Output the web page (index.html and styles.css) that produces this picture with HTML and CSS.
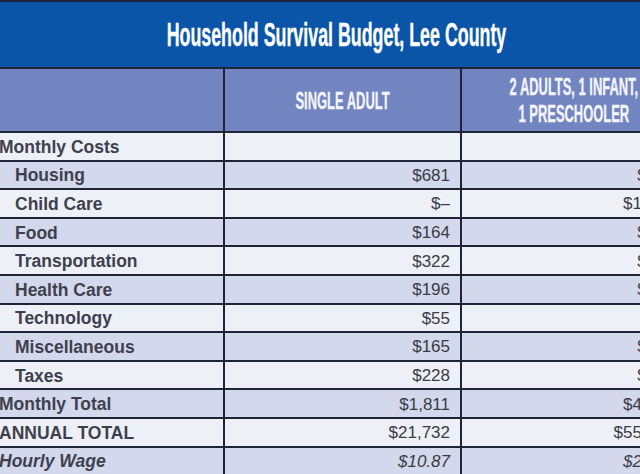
FILE: index.html
```html
<!DOCTYPE html>
<html lang="en">
<head>
<meta charset="utf-8">
<title>Household Survival Budget, Lee County</title>
<link rel="stylesheet" href="styles.css">
</head>
<body>
<div class="budget">
  <div class="title"><span class="cond title-text">Household Survival Budget, Lee County</span></div>

  <div class="head blank"></div>
  <div class="head"><span class="cond head-text">SINGLE ADULT</span></div>
  <div class="head"><span class="cond head-text">2 ADULTS, 1 INFANT,<br>1 PRESCHOOLER</span></div>

  <div class="cell label light">Monthly Costs</div>
  <div class="cell value light"></div>
  <div class="cell value light"></div>

  <div class="cell label sub dark">Housing</div>
  <div class="cell value dark">$681</div>
  <div class="cell value dark">$839</div>

  <div class="cell label sub light">Child Care</div>
  <div class="cell value light">$–</div>
  <div class="cell value light">$1,104</div>

  <div class="cell label sub dark">Food</div>
  <div class="cell value dark">$164</div>
  <div class="cell value dark">$571</div>

  <div class="cell label sub light">Transportation</div>
  <div class="cell value light">$322</div>
  <div class="cell value light">$644</div>

  <div class="cell label sub dark">Health Care</div>
  <div class="cell value dark">$196</div>
  <div class="cell value dark">$589</div>

  <div class="cell label sub light">Technology</div>
  <div class="cell value light">$55</div>
  <div class="cell value light">$75</div>

  <div class="cell label sub dark">Miscellaneous</div>
  <div class="cell value dark">$165</div>
  <div class="cell value dark">$420</div>

  <div class="cell label sub light">Taxes</div>
  <div class="cell value light">$228</div>
  <div class="cell value light">$379</div>

  <div class="cell label dark">Monthly Total</div>
  <div class="cell value dark">$1,811</div>
  <div class="cell value dark">$4,621</div>

  <div class="cell label light">ANNUAL TOTAL</div>
  <div class="cell value light">$21,732</div>
  <div class="cell value light">$55,452</div>

  <div class="cell label dark italic">Hourly Wage</div>
  <div class="cell value dark italic">$10.87</div>
  <div class="cell value dark italic">$27.73</div>
</div>
</body>
</html>
```

FILE: styles.css
```css
html, body {
  margin: 0;
  padding: 0;
  background: #eef0f8;
  overflow: hidden;
}

.budget {
  display: grid;
  grid-template-columns: 236px 235px 223px;
  grid-template-rows: 65px 62px repeat(12, 26.6px);
  gap: 2px;
  padding-top: 2px;
  margin-left: -13px;
  width: 698px;
  background: #1f2437;
  font-family: "Liberation Sans", Arial, sans-serif;
}

.title {
  grid-column: 1 / -1;
  background: #0b55a8;
  display: flex;
  align-items: center;
  justify-content: center;
}

.cond {
  display: inline-block;
  font-family: "Liberation Sans", Arial, sans-serif;
  font-weight: 700;
  white-space: nowrap;
  color: #ffffff;
  transform-origin: center center;
}

.title-text {
  font-size: 33px;
  line-height: 36px;
  transform: scaleX(0.54);
  -webkit-text-stroke: 0.4px #ffffff;
}

.head {
  background: #7385c1;
  display: flex;
  align-items: center;
  justify-content: center;
  text-align: center;
}

.head-text {
  font-size: 23.5px;
  line-height: 27px;
  color: #f4f5fb;
  transform: scaleX(0.55);
  -webkit-text-stroke: 0.3px #f4f5fb;
  padding-top: 2px;
}

.cell {
  display: flex;
  align-items: center;
  font-size: 17px;
  padding-top: 2px;
  box-sizing: border-box;
}

.light {
  background: #eef0f8;
}

.dark {
  background: #d3d8ed;
}

.label {
  font-weight: 700;
  font-size: 17.5px;
  color: #3f404d;
  padding-left: 12px;
}

.label.sub {
  padding-left: 28px;
}

.value {
  justify-content: flex-end;
  padding-right: 10px;
  color: #3a3b44;
}

.italic {
  font-style: italic;
}
```
